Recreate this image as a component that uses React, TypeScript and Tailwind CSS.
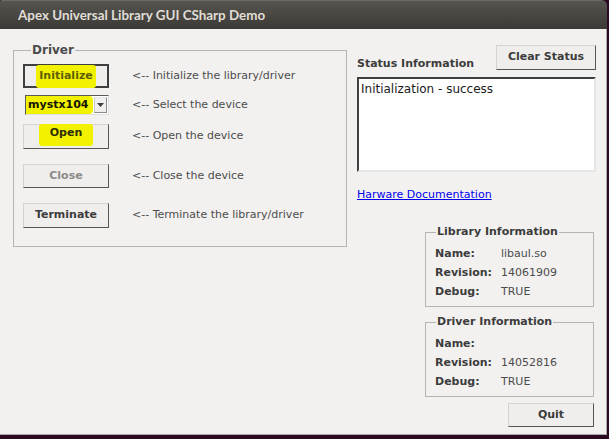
import React from 'react';

const font = { fontFamily: '"DejaVu Sans", sans-serif' };

const Btn = ({ children, focused, disabled, className = '' }: { children: React.ReactNode; focused?: boolean; disabled?: boolean; className?: string }) => (
  <button
    className={`flex items-center justify-center bg-[#efeeed] text-[11px] font-bold ${
      focused
        ? 'border-2 border-[#3f3f3f]'
        : 'border border-t-[#d4d3d2] border-l-[#d4d3d2] border-b-[#555555] border-r-[#555555]'
    } ${disabled ? 'text-[#8c8b89]' : 'text-[#3c3c3c]'} ${className}`}
  >
    {children}
  </button>
);

const InfoGroup = ({ title, rows }: { title: string; rows: [string, string][] }) => (
  <fieldset className="ml-[68px] w-[169px] border border-[#b6b5b3] px-[9px] pb-[6px]">
    <legend className="ml-[1px] px-[1px] text-[11px] leading-[14px] font-bold text-[#3c3c3c]">{title}</legend>
    <div className="flex flex-col gap-[4px] pt-[8px]">
      {rows.map(([k, v]) => (
        <div key={k} className="flex items-center h-[15px] text-[11px]">
          <span className="w-[66px] font-bold text-[#3c3c3c]">{k}</span>
          <span className="text-[#4c4c4c]">{v}</span>
        </div>
      ))}
    </div>
  </fieldset>
);

const App: React.FC = () => {
  return (
    <div className="w-[609px] h-[439px] bg-[#2c0a22] overflow-hidden" style={font}>
      {/* Window */}
      <div className="w-[607px] h-[435px] flex flex-col">
        {/* Title bar */}
        <div className="h-[29px] rounded-tr-[6px] rounded-tl-[2px] bg-gradient-to-b from-[#55544f] to-[#3b3a36] border-t border-[#6a6964] flex items-center pl-[18px]">
          <span className="text-[#e0ddd6] text-[13.4px] font-bold" style={{ fontFamily: 'Lato, sans-serif' }}>
            Apex Universal Library GUI CSharp Demo
          </span>
        </div>

        {/* Body */}
        <div className="flex-1 bg-[#f2f1f0] border-r border-b border-[#a9a8a6] flex">
          {/* Left column: Driver */}
          <div className="ml-[13px] mt-[14px]">
            <fieldset className="w-[334px] h-[204px] border border-[#b6b5b3] pl-[9px]">
              <legend className="ml-[8px] px-[1px] text-[12px] leading-[14px] font-bold text-[#4c4c4c]">Driver</legend>
              <div className="flex flex-col text-[11px] text-[#4c4c4c]">
                <div className="flex items-center mt-[7px]">
                  <Btn focused className="w-[86px] h-[24px]">
                    <span className="bg-[#f2f200] px-[3px] pt-[3px] pb-[4px] mt-[1px] rounded-[3px] text-[#5e5d00]">Initialize</span>
                  </Btn>
                  <span className="ml-[23px]">&lt;-- Initialize the library/driver</span>
                </div>
                <div className="flex items-center mt-[7px]">
                  <div className="ml-[2px] w-[84px] h-[20px] flex items-center bg-white border border-t-[#5a5a5a] border-l-[#5a5a5a] border-b-[#e0e0e0] border-r-[#e0e0e0]">
                    <div className="flex items-center h-[18px] bg-[#f2f200] pl-[2px] pr-[4px] rounded-r-[4px]">
                      <span className="text-[11px] font-bold text-[#151500]">mystx104</span>
                    </div>
                    <div className="ml-auto mr-[1px] w-[13px] h-[16px] flex items-center justify-center bg-[#efeeed] border border-t-[#e8e8e8] border-l-[#c8c8c8] border-b-[#8a8a8a] border-r-[#8a8a8a]">
                      <svg width="7" height="4" viewBox="0 0 7 4">
                        <path d="M0 0h7L3.5 4z" fill="#3c3c3c" />
                      </svg>
                    </div>
                  </div>
                  <span className="ml-[23px]">&lt;-- Select the device</span>
                </div>
                <div className="flex items-center mt-[9px]">
                  <Btn className="w-[86px] h-[25px]">
                    <span className="bg-[#f2f200] px-[11px] pt-[1px] pb-[5px] rounded-[3px] text-[#2e2e00] mt-[-3px]">Open</span>
                  </Btn>
                  <span className="ml-[23px]">&lt;-- Open the device</span>
                </div>
                <div className="flex items-center mt-[15px]">
                  <Btn disabled className="w-[86px] h-[24px]">Close</Btn>
                  <span className="ml-[23px]">&lt;-- Close the device</span>
                </div>
                <div className="flex items-center mt-[15px]">
                  <Btn className="w-[86px] h-[25px]">Terminate</Btn>
                  <span className="ml-[23px]">&lt;-- Terminate the library/driver</span>
                </div>
              </div>
            </fieldset>
          </div>

          {/* Right column */}
          <div className="ml-[10px] w-[239px] flex flex-col">
            <div className="mt-[16px] flex items-end justify-between">
              <span className="text-[11px] leading-[14px] font-bold text-[#3c3c3c] mb-[-1px]">Status Information</span>
              <Btn className="w-[100px] h-[25px]">Clear Status</Btn>
            </div>
            <div className="mt-[7px] h-[95px] bg-white border-2 border-t-[#3e3e3e] border-l-[#3e3e3e] border-b-[#e6e6e6] border-r-[#e6e6e6] px-[2px] pt-[1px] text-[12px] text-[#1a1a1a]">
              Initialization - success
            </div>
            <a href="#" className="mt-[16px] text-[11px] leading-[14px] text-[#0000ee] underline">
              Harware Documentation
            </a>

            <div className="mt-[23px]">
              <InfoGroup
                title="Library Information"
                rows={[
                  ['Name:', 'libaul.so'],
                  ['Revision:', '14061909'],
                  ['Debug:', 'TRUE'],
                ]}
              />
            </div>
            <div className="mt-[8px]">
              <InfoGroup
                title="Driver Information"
                rows={[
                  ['Name:', ''],
                  ['Revision:', '14052816'],
                  ['Debug:', 'TRUE'],
                ]}
              />
            </div>
            <div className="mt-[6px] flex justify-end pr-[2px]">
              <Btn className="w-[86px] h-[24px]">Quit</Btn>
            </div>
          </div>
        </div>
      </div>
      <div className="h-[4px] bg-[#2c0a22]" />
    </div>
  );
};

export default App;
